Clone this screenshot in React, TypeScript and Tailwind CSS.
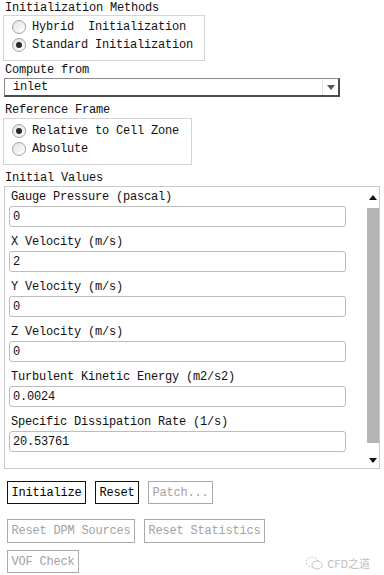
import type { ReactNode } from "react";

const mono = "font-['Liberation_Mono','DejaVu_Sans_Mono',monospace] text-[12px] tracking-[-0.2px] leading-none";

const fields = [
  { label: "Gauge Pressure (pascal)", value: "0" },
  { label: "X Velocity (m/s)", value: "2" },
  { label: "Y Velocity (m/s)", value: "0" },
  { label: "Z Velocity (m/s)", value: "0" },
  { label: "Turbulent Kinetic Energy (m2/s2)", value: "0.0024" },
  { label: "Specific Dissipation Rate (1/s)", value: "20.53761" },
];

function Radio({ checked, children }: { checked?: boolean; children: ReactNode }) {
  return (
    <div className="flex h-[18px] items-center gap-[6px] pl-[8px]">
      <span className="flex h-[14px] w-[14px] items-center justify-center rounded-full border border-[#a3a3a3] bg-gradient-to-br from-[#e2e2e2] to-white">
        {checked && <span className="h-[6px] w-[6px] rounded-full bg-[#2a2a2a]" />}
      </span>
      <span>{children}</span>
    </div>
  );
}

function Btn({ children, disabled, w }: { children: ReactNode; disabled?: boolean; w: string }) {
  return (
    <button
      type="button"
      className={`${w} flex items-center justify-center border ${
        disabled ? "border-[#a9a9a9] text-[#a2a2a2]" : "border-[#111] text-black"
      }`}
    >
      {children}
    </button>
  );
}

function Tri({ up, color = "#111" }: { up?: boolean; color?: string }) {
  return (
    <svg width="8" height="5" viewBox="0 0 8 5">
      <path d={up ? "M0 5 L4 0 L8 5 Z" : "M0 0 L8 0 L4 5 Z"} fill={color} />
    </svg>
  );
}

export default function App() {
  return (
    <div className={`h-[575px] w-[384px] overflow-hidden bg-white text-[#111] ${mono}`}>
      <div className="flex h-[15px] items-center pl-[5px]">Initialization Methods</div>
      <div className="ml-[3px] h-[46px] w-[202px] border border-[#d4d4d4] pt-[2px]">
        <Radio>Hybrid&nbsp;&nbsp;Initialization</Radio>
        <Radio checked>Standard Initialization</Radio>
      </div>

      <div className="flex h-[16px] items-center pl-[5px] pt-[1px]">Compute from</div>
      <div className="ml-[4px] mt-[1px] flex h-[19px] w-[336px] items-center justify-between border border-[#8a8a8a] border-b-2 border-r-2 border-b-[#4a4a4a] border-r-[#4a4a4a] pl-[8px]">
        <span>inlet</span>
        <span className="flex h-full w-[16px] items-center justify-center border-l border-[#e4e4e4]">
          <Tri color="#555" />
        </span>
      </div>

      <div className="mt-[4px] flex h-[17px] items-center pl-[5px]">Reference Frame</div>
      <div className="ml-[3px] h-[47px] w-[189px] border border-[#d4d4d4] pt-[3px]">
        <Radio checked>Relative to Cell Zone</Radio>
        <Radio>Absolute</Radio>
      </div>

      <div className="mt-[5px] flex h-[16px] items-center pl-[5px]">Initial Values</div>
      <div className="ml-[4px] flex h-[283px] w-[376px] border border-[#c9c9c9]">
        <div className="flex flex-1 flex-col pl-[4px] pt-[1px]">
          {fields.map((f, i) => (
            <div key={f.label} className={i > 0 ? "mt-[6px]" : ""}>
              <div className="flex h-[17px] items-center pl-[2px]">{f.label}</div>
              <div className="mt-[1px] flex h-[21px] w-[337px] items-center rounded-[3px] border border-[#bdbdbd] pl-[3px]">
                {f.value}
              </div>
            </div>
          ))}
        </div>
        <div className="flex w-[13px] flex-col items-center">
          <div className="flex h-[21px] items-center justify-center">
            <Tri up />
          </div>
          <div className="h-[235px] w-[12px] bg-[#b4b4b4]" />
          <div className="flex flex-1 items-end justify-center pb-[5px]">
            <Tri />
          </div>
        </div>
      </div>

      <div className="ml-[7px] mt-[12px] flex h-[23px] gap-[9px]">
        <Btn w="w-[79px]">Initialize</Btn>
        <Btn w="w-[44px]">Reset</Btn>
        <Btn w="w-[65px]" disabled>Patch...</Btn>
      </div>
      <div className="ml-[7px] mt-[15px] flex h-[24px] gap-[9px]">
        <Btn w="w-[128px]" disabled>Reset DPM Sources</Btn>
        <Btn w="w-[121px]" disabled>Reset Statistics</Btn>
      </div>
      <div className="ml-[7px] mt-[7px] flex h-[23px] items-center justify-between pr-[14px]">
        <Btn w="w-[72px] h-[23px]" disabled>VOF Check</Btn>
        <div className="flex items-center gap-[4px] pt-[3px] text-[#bdbdbd]">
          <svg width="18" height="14" viewBox="0 0 18 14" fill="none" stroke="#c4c4c4" strokeWidth="1">
            <ellipse cx="7" cy="6" rx="6" ry="5" strokeDasharray="2 1.5" />
            <ellipse cx="12" cy="9" rx="5" ry="4" fill="white" />
          </svg>
          <span className="font-['Noto_Sans_CJK_SC',sans-serif] text-[11px] tracking-normal">CFD之道</span>
        </div>
      </div>
    </div>
  );
}
